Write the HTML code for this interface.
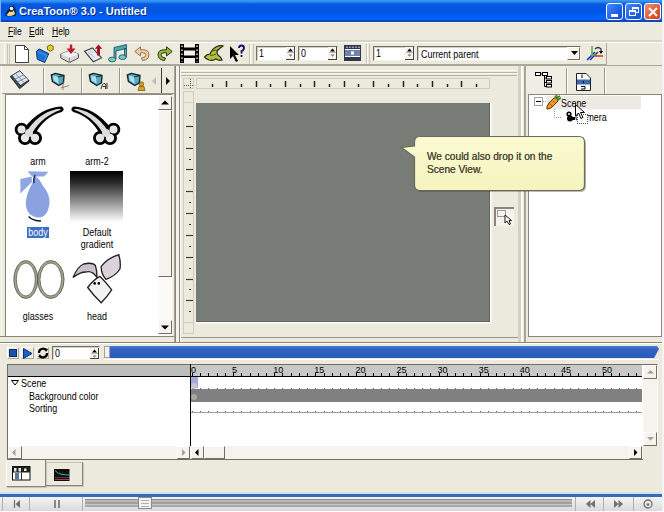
<!DOCTYPE html>
<html><head><meta charset="utf-8">
<style>
*{margin:0;padding:0;box-sizing:border-box}
body{width:664px;height:512px;overflow:hidden;background:#ECEADD;font-family:"Liberation Sans",sans-serif;font-size:11px;color:#000;position:relative}
.a{position:absolute}
svg{position:absolute;overflow:visible}
#title{left:0;top:0;width:662px;height:22px;background:linear-gradient(#3A9CF8 0px,#2A86F0 2px,#0858E0 4px,#0055E2 13px,#0060F8 16px,#0062FA 19.5px,#1848B8 20.5px,#103EA8 22px);}
#title .t{left:19px;top:4px;color:#F4F8FF;font-weight:bold;font-size:11px;line-height:14px;text-shadow:1px 1px 0 #0A2A80}
.tb{top:3px;width:17px;height:17px;border:1px solid #fff;border-radius:3px;background:linear-gradient(135deg,#4A8BFF,#1E5FE8 60%,#1A4FD0)}
.menu span{position:absolute;top:26px;font-size:10px;line-height:12px;transform-origin:0 0;transform:scaleX(.85)}
.u{position:absolute;font-size:10.5px;line-height:12px;transform-origin:0 0;transform:scaleX(.85);white-space:nowrap}
.uc{position:absolute;font-size:10.5px;line-height:12px;transform:scaleX(.85);white-space:nowrap;text-align:center;width:70px}
.hl{background:#fff}
.sh{background:#ACA899}
.spin{background:#fff;border:1px solid;border-color:#6F6F66 #F4F3EE #F4F3EE #6F6F66;box-shadow:inset 1px 1px 0 #D4D1C4}
.ruler{border:1px solid #D0CDC0}

.btn3d{background:#F4F3EE;border:1px solid;border-color:#fff #716F64 #716F64 #fff}
.vl{width:1px}
.hz{height:1px}
</style></head><body>
<!-- title -->
<div id="title" class="a">
  <svg style="left:3px;top:3px" width="15" height="15"><path d="M1.5 12 L7.5 3 L11 2.5 L13.5 9 L12.5 13 L4 13.5Z" fill="#0A1A40" opacity="0.85"/><circle cx="8.5" cy="5.5" r="1.8" fill="#F0F0E0"/><path d="M3.5 12 L7 8 L11 7.5 L12 11 L9 12.8 L5 13Z" fill="#E8DC80"/><path d="M7 8.5 L10 8" stroke="#202020" stroke-width="1.2"/></svg>
  <div class="a t">CreaToon® 3.0 - Untitled</div>
  <div class="a tb" style="left:606px"><div class="a" style="left:4px;top:10px;width:7px;height:3px;background:#fff"></div></div>
  <div class="a tb" style="left:625px"><div class="a" style="left:6px;top:3px;width:7px;height:6px;border:1px solid #fff;border-top-width:2px"></div><div class="a" style="left:3px;top:6px;width:7px;height:6px;border:1px solid #fff;border-top-width:2px;background:#2a6af0"></div></div>
  <div class="a tb" style="left:644px;background:linear-gradient(135deg,#F09070,#E05A30 60%,#C84018)"><svg style="left:3px;top:3px" width="10" height="10"><path d="M1 1L9 9M9 1L1 9" stroke="#fff" stroke-width="2"/></svg></div>
</div>
<div class="a" style="left:662px;top:0;width:2px;height:512px;background:#f4f4f4"></div>
<div class="a" style="left:0;top:0;width:1px;height:22px;background:#7AB0F8"></div>
<div class="a hz" style="left:0;top:22px;width:662px;background:#EEF4FC"></div>
<div class="a hz" style="left:0;top:23px;width:662px;background:#E6E6E0"></div>
<div class="menu">
  <span style="left:8px"><u>F</u>ile</span>
  <span style="left:29px"><u>E</u>dit</span>
  <span style="left:52px"><u>H</u>elp</span>
</div>

<!-- toolbar -->
<div class="a hz" style="left:0;top:40px;width:662px;background:#D8D5C8"></div>
<div class="a hz" style="left:0;top:41px;width:662px;background:#D8D5C8"></div>
<div class="a hz hl" style="left:0;top:42px;width:662px"></div>
<div class="a" style="left:0;top:43px;width:607px;height:22px;border-right:1px solid #ACA899;border-bottom:1px solid #ACA899"></div>
<div class="a" style="left:4px;top:44px;width:1px;height:20px;background:#fff"></div>
<div class="a" style="left:7px;top:44px;width:3px;height:20px;border-left:1px solid #C8C5B8;border-right:1px solid #C8C5B8"></div>
<!-- new -->
<svg style="left:15px;top:45px" width="14" height="18"><path d="M0.5 0.5H9.5L13.5 4.5V17.5H0.5Z" fill="#fff" stroke="#404040"/><path d="M9.5 0.5V4.5H13.5" fill="none" stroke="#404040"/></svg>
<!-- open folder w/ gem -->
<svg style="left:35px;top:44px" width="20" height="20"><path d="M1.4 7.3 L4.4 5 L13.8 9.6 L9.7 18.6 L2.2 15.2Z" fill="#1E72D0" stroke="#0A3A7A" stroke-width="1"/><path d="M3 8 L12 11.5 L9 17" stroke="#4A9AF0" fill="none"/><path d="M15.3 0.8 L18.2 2.4 L18.2 5.6 L15.3 7.2 L12.4 5.6 L12.4 2.4Z" fill="#E0D020" stroke="#6A5A00" stroke-width="0.9"/></svg>
<!-- import -->
<svg style="left:60px;top:44px" width="20" height="20"><path d="M0.8 10 L9.5 6.8 L18.5 10 L18.5 14 L9.5 18.6 L0.8 14Z" fill="#D8D8D8" stroke="#505050" stroke-width="1"/><path d="M0.8 10 L9.5 13.5 L18.5 10 L9.5 6.8Z" fill="#F4F4F4"/><path d="M9.5 13.5V18.5" stroke="#909090"/><path d="M9.8 0.5 H12.2 V4.5 H15.5 L11 10 L6.5 4.5 H9.8Z" fill="#C0182A"/></svg>
<!-- export -->
<svg style="left:84px;top:44px" width="20" height="19"><path d="M0.5 7.2 L8.4 4 L17.5 13.9 L9.3 17.7Z" fill="#E8ECF4" stroke="#404040" stroke-width="1.1"/><path d="M4 8 L11 14 M6 6.5 L9 9" stroke="#A0A8B8" stroke-width="0.8"/><path d="M14.5 0.6 L18.3 4.8 L16 4.8 L16 11.5 L13 11.5 L13 4.8 L10.8 4.8Z" fill="#A81020"/></svg>
<!-- music -->
<svg style="left:108px;top:44px" width="20" height="19"><path d="M6 3.5 L18.5 0.5 L18.5 4.5 L8 7 L8 15 L6 15Z M16.5 4.5 L18.5 4.5 L18.5 13 L16.5 13Z" fill="#4AA8B0" stroke="#1A4A5A" stroke-width="0.8"/><ellipse cx="4.2" cy="15.5" rx="3.6" ry="2.4" fill="#70D0C0" stroke="#1A4A5A" stroke-width="0.8"/><ellipse cx="14.5" cy="13.2" rx="3.6" ry="2.4" fill="#70C8D0" stroke="#1A4A5A" stroke-width="0.8"/></svg>
<!-- undo -->
<svg style="left:134px;top:46px" width="16" height="16"><path d="M0.8 5.5 L6.5 0.8 L6.5 3.8 L9.5 3.8 Q15 4 15 9 Q14.5 14 8.5 14.5 L7.5 12 Q12 11.5 12 9 Q12 6.8 9 6.8 L6.5 6.8 L6.5 10Z" fill="#F2CC9C" stroke="#8A6A48" stroke-width="0.9"/></svg>
<!-- redo -->
<svg style="left:157px;top:46px" width="16" height="16"><g transform="translate(16,0) scale(-1,1)"><path d="M0.8 5.5 L6.5 0.8 L6.5 3.8 L9.5 3.8 Q15 4 15 9 Q14.5 14 8.5 14.5 L7.5 12 Q12 11.5 12 9 Q12 6.8 9 6.8 L6.5 6.8 L6.5 10Z" fill="#9AB040" stroke="#2A3810" stroke-width="1"/></g></svg>
<!-- film -->
<svg style="left:180px;top:44px" width="19" height="19"><rect x="0" y="0" width="19" height="19" fill="#F4F2EA"/><rect x="0" y="0" width="4" height="19" fill="#000"/><rect x="15" y="0" width="4" height="19" fill="#000"/><rect x="4" y="3.5" width="11" height="3" fill="#000"/><rect x="4" y="11.5" width="11" height="2.5" fill="#000"/><path d="M2 1.5V18 M17 1.5V18" stroke="#fff" stroke-width="1.3" stroke-dasharray="1.5 2.5"/></svg>
<!-- green tool -->
<svg style="left:203px;top:44px" width="22" height="20"><path d="M1.5 13 Q4 10 7 10 Q9 5 13 3 Q17 1 20 2 Q17 4 15 6 Q13 8 15 11 Q18 13 19 16 Q16 17 13 15 Q10 17 6 16 Q3 15 1.5 13Z" fill="#B0C040" stroke="#202810" stroke-width="1.2"/><path d="M7 11 Q10 12 13 10 M9 7 Q12 6 15 6" stroke="#404A10" stroke-width="0.9" fill="none"/></svg>
<!-- help cursor -->
<svg style="left:229px;top:45px" width="16" height="18"><path d="M1 1 V14 L4 11 L7 17 L9 16 L6 10 L10 10 Z" fill="#000"/><path d="M10 3 Q10 0.5 12.5 0.5 Q15 0.5 15 3 Q15 5 12.5 6 V8.5 M12.5 10 V12" stroke="#101060" stroke-width="1.8" fill="none"/></svg>
<!-- grips -->
<div class="a" style="left:249px;top:44px;width:1px;height:20px;background:#C8C5B8"></div>
<div class="a" style="left:250px;top:44px;width:1px;height:20px;background:#fff"></div>
<div class="a" style="left:253px;top:44px;width:1px;height:20px;background:#C8C5B8"></div>
<!-- spins -->
<div class="a spin" style="left:256px;top:46px;width:40px;height:15px"></div>
<div class="u" style="left:259px;top:47px">1</div>
<div class="a" style="left:286px;top:47px;width:9px;height:13px;background:#F6F5F0;border-right:1px solid #404040;border-bottom:1px solid #404040"></div>
<div class="a hz" style="left:287px;top:52px;width:7px;background:#B8B6A8"></div>
<svg style="left:288px;top:48px" width="6" height="10"><path d="M0 3.5L2.5 0.5L5 3.5Z" fill="#000"/><path d="M0.5 6.5L2.5 8.8L4.5 6.5Z" fill="#808080"/></svg>
<div class="a spin" style="left:298px;top:46px;width:40px;height:15px"></div>
<div class="u" style="left:301px;top:47px">0</div>
<div class="a" style="left:328px;top:47px;width:9px;height:13px;background:#F6F5F0;border-right:1px solid #404040;border-bottom:1px solid #404040"></div>
<div class="a hz" style="left:329px;top:52px;width:7px;background:#B8B6A8"></div>
<svg style="left:330px;top:48px" width="6" height="10"><path d="M0 3.5L2.5 0.5L5 3.5Z" fill="#000"/><path d="M0.5 6.5L2.5 8.8L4.5 6.5Z" fill="#808080"/></svg>
<!-- frame icon -->
<svg style="left:344px;top:45px" width="17" height="16"><rect x="0.5" y="0.5" width="16" height="15" fill="#fff" stroke="#303848"/><rect x="1" y="1" width="15" height="3" fill="#303848"/><rect x="1" y="12" width="15" height="3" fill="#303848"/><rect x="1" y="5" width="15" height="6" fill="#7080B0"/><rect x="7" y="6.5" width="3" height="3" fill="#fff"/><path d="M3 1.5V3M6 1.5V3M9 1.5V3M12 1.5V3M15 1.5V3" stroke="#fff"/></svg>
<div class="a" style="left:366px;top:44px;width:1px;height:20px;background:#C8C5B8"></div>
<div class="a" style="left:367px;top:44px;width:1px;height:20px;background:#fff"></div>
<div class="a" style="left:369px;top:44px;width:1px;height:20px;background:#C8C5B8"></div>
<div class="a spin" style="left:373px;top:46px;width:42px;height:15px"></div>
<div class="u" style="left:376px;top:47px">1</div>
<div class="a" style="left:405px;top:47px;width:9px;height:13px;background:#F6F5F0;border-right:1px solid #404040;border-bottom:1px solid #404040"></div>
<div class="a hz" style="left:406px;top:52px;width:7px;background:#B8B6A8"></div>
<svg style="left:407px;top:48px" width="6" height="10"><path d="M0 3.5L2.5 0.5L5 3.5Z" fill="#000"/><path d="M0.5 6.5L2.5 8.8L4.5 6.5Z" fill="#808080"/></svg>
<div class="a spin" style="left:417px;top:46px;width:164px;height:15px"></div>
<div class="u" style="left:421px;top:48px">Current parent</div>
<div class="a btn3d" style="left:567px;top:47px;width:13px;height:13px;border-color:#fff #716F64 #716F64 #fff"></div>
<svg style="left:571px;top:51px" width="7" height="5"><path d="M0 0H7L3.5 4Z" fill="#000"/></svg>
<!-- axes icon -->
<svg style="left:586px;top:45px" width="18" height="16"><path d="M1 15 L9 7 M4 15 L12 7" stroke="#2030C0" stroke-width="1.6"/><path d="M6 1 V11 M6 10 H11" stroke="#40C040" stroke-width="1.6"/><path d="M8 11 H17" stroke="#D04030" stroke-width="1.6"/><path d="M9 4 Q12 1 15 4 L15 7" stroke="#303030" stroke-width="1.2" fill="none"/><path d="M13 6 L15 9 L17 6Z" fill="#000"/></svg>

<div class="a hz sh" style="left:0;top:65px;width:662px"></div>
<!-- LEFT PANEL -->
<div class="a" style="left:1px;top:66px;width:1px;height:272px;background:#fff"></div>
<div class="a" style="left:2px;top:67px;width:41px;height:27px;background:#F0EEE4"></div>
<div class="a vl" style="left:43px;top:68px;height:26px;background:#9A978A"></div>
<div class="a vl" style="left:44px;top:68px;height:26px;background:#fff"></div>
<div class="a vl" style="left:81px;top:68px;height:26px;background:#9A978A"></div>
<div class="a vl" style="left:82px;top:68px;height:26px;background:#fff"></div>
<div class="a vl" style="left:119px;top:68px;height:26px;background:#9A978A"></div>
<div class="a vl" style="left:120px;top:68px;height:26px;background:#fff"></div>
<div class="a vl" style="left:161px;top:68px;height:26px;background:#404040"></div>
<svg style="left:152px;top:77px" width="5" height="8"><path d="M4 0V8L0 4Z" fill="#C0BDB0"/></svg>
<svg style="left:166px;top:77px" width="5" height="8"><path d="M0 0V8L4 4Z" fill="#000"/></svg>
<!-- tab icons -->
<svg style="left:9px;top:70px" width="22" height="20"><path d="M1.2 6.5 L10.7 0.7 L20.2 10.8 L10.7 18.7Z" fill="#3A4048" stroke="#20252A" stroke-width="0.8"/><path d="M3.5 5.5 L10.7 1.3 L19.2 10 L11.5 15Z" fill="#DCE6F0"/><path d="M6.6 3.8 L15 12.7 M4.8 9.8 L14.8 4.8 M7.5 12.5 L17 7.5" stroke="#6A7A8A" stroke-width="0.8"/></svg>
<svg style="left:49px;top:71px" width="22" height="20"><path d="M2.3 4 L6.5 2.4 L15 4.5 L14.4 11.9 L9.7 14.5 L3.4 10.3Z" fill="#5AA8C0" stroke="#102A30" stroke-width="1.4" stroke-linejoin="round"/><path d="M4 4.6 L9 6 L9.6 12.8 L4.6 9.6Z" fill="#A8E0F0"/><path d="M9 6 L14.5 4.8" stroke="#102A30" stroke-width="0.9"/><path d="M11.5 17 L20.2 14.5 M14 10 V19" stroke="#8A7060" stroke-width="0.8"/></svg>
<svg style="left:87px;top:71px" width="22" height="20"><path d="M2.3 4 L6.5 2.4 L15 4.5 L14.4 11.9 L9.7 14.5 L3.4 10.3Z" fill="#5AA8C0" stroke="#102A30" stroke-width="1.4" stroke-linejoin="round"/><path d="M4 4.6 L9 6 L9.6 12.8 L4.6 9.6Z" fill="#A8E0F0"/><path d="M9 6 L14.5 4.8" stroke="#102A30" stroke-width="0.9"/><path d="M14 18 Q15 12 18 12.5 Q19.5 13.5 18.5 18 M15.5 15.5 H19 M20 12V18" stroke="#303030" stroke-width="1" fill="none"/></svg>
<svg style="left:125px;top:71px" width="22" height="20"><path d="M2.3 4 L6.5 2.4 L15 4.5 L14.4 11.9 L9.7 14.5 L3.4 10.3Z" fill="#5AA8C0" stroke="#102A30" stroke-width="1.4" stroke-linejoin="round"/><path d="M4 4.6 L9 6 L9.6 12.8 L4.6 9.6Z" fill="#A8E0F0"/><path d="M9 6 L14.5 4.8" stroke="#102A30" stroke-width="0.9"/><circle cx="16.5" cy="13" r="2.2" fill="#D8A020" stroke="#604000" stroke-width="0.6"/><path d="M13 19.5 L14 15.5 H19 L20 19.5Z" fill="#D8A020" stroke="#604000" stroke-width="0.6"/></svg>

<div class="a hz" style="left:2px;top:93px;width:172px;background:#9A978A"></div>
<div class="a" style="left:5px;top:94px;width:168px;height:243px;border:1px solid;border-color:#8A877A #F4F3EE #8A877A #8A877A"></div>
<div class="a" style="left:6px;top:95px;width:152px;height:241px;background:#fff"></div>
<div class="a" style="left:158px;top:95px;width:14px;height:241px;background:#FAFAF6"></div>
<div class="a hz" style="left:0;top:336px;width:175px;background:#8A877A"></div>
<div class="a btn3d" style="left:158px;top:96px;width:14px;height:14px;border-color:#fff #716F64 #716F64 #fff"></div>
<div class="a btn3d" style="left:158px;top:110px;width:14px;height:167px;border-color:#fff #716F64 #716F64 #fff"></div>
<div class="a btn3d" style="left:158px;top:320px;width:14px;height:14px;border-color:#fff #716F64 #716F64 #fff"></div>
<svg style="left:161px;top:100px" width="8" height="5"><path d="M0 4.5L4 0.5L8 4.5Z" fill="#000"/></svg>
<svg style="left:161px;top:325px" width="8" height="5"><path d="M0 0.5L4 4.5L8 0.5Z" fill="#000"/></svg>

<!-- arm -->
<svg style="left:14px;top:104px" width="54" height="42"><g fill="#000" stroke="#000" stroke-width="1.6" stroke-linejoin="round"><path d="M47 3.2 C36 3.7 21 10 10 26 L20 31 C26 18 37 9.7 47.5 7.2 Q50.5 5.2 47 3.2Z"/><circle cx="7.5" cy="25.5" r="6"/><circle cx="11" cy="34" r="6.2"/><circle cx="21" cy="34" r="6.2"/><circle cx="15" cy="29" r="5.5"/></g><g fill="#DCDCDC"><path d="M46 4.8 C36 5.7 23 11.5 12.5 27.5 L18 29.5 C25 17 36 9.7 46.2 6.1 Q47.5 5.5 46 4.8Z"/><circle cx="7.5" cy="25.5" r="4" fill="#E6E6E6"/><circle cx="11" cy="34" r="4.2" fill="#EAEAEA"/><circle cx="21" cy="34" r="4.2" fill="#E6E6E6"/><circle cx="15" cy="29" r="4"/></g></svg>
<svg style="left:67px;top:104px" width="54" height="42"><g transform="translate(54,0) scale(-1,1)"><g fill="#000" stroke="#000" stroke-width="1.6" stroke-linejoin="round"><path d="M47 3.2 C36 3.7 21 10 10 26 L20 31 C26 18 37 9.7 47.5 7.2 Q50.5 5.2 47 3.2Z"/><circle cx="7.5" cy="25.5" r="6"/><circle cx="11" cy="34" r="6.2"/><circle cx="21" cy="34" r="6.2"/><circle cx="15" cy="29" r="5.5"/></g><g fill="#DCDCDC"><path d="M46 4.8 C36 5.7 23 11.5 12.5 27.5 L18 29.5 C25 17 36 9.7 46.2 6.1 Q47.5 5.5 46 4.8Z"/><circle cx="7.5" cy="25.5" r="4" fill="#E6E6E6"/><circle cx="11" cy="34" r="4.2" fill="#EAEAEA"/><circle cx="21" cy="34" r="4.2" fill="#E6E6E6"/><circle cx="15" cy="29" r="4"/></g></g></svg>
<div class="uc" style="left:3px;top:155px">arm</div>
<div class="uc" style="left:62px;top:155px">arm-2</div>
<!-- body -->
<svg style="left:19px;top:170px" width="34" height="54"><path d="M8.5 1.3 L29.5 1.8 L25 6.5 L13 6.5Z" fill="#90A6E2"/><path d="M1.4 8.9 L12.6 6.5 L13 12 L1.4 23.5Z" fill="#90A6E2"/><path d="M16 6 Q20 8 24 16 Q31 24 30.5 33 Q29 47 20 47.5 Q8 47 6.7 34 Q7 24 13 14 Q15 9 16 6Z" fill="#8AA2E0"/><path d="M16 5 Q14 9 15 13" stroke="#1A2A70" stroke-width="1.6" fill="none"/><path d="M9.6 46.4 Q14 51 22 51" stroke="#101830" stroke-width="1.4" fill="none"/></svg>
<div class="a" style="left:27px;top:227px;width:22px;height:11px;background:#3D6DC5"></div>
<div class="uc" style="left:3px;top:226px;color:#fff">body</div>
<div class="a" style="left:70px;top:171px;width:53px;height:51px;background:linear-gradient(#000 0%,#303030 25%,#909090 60%,#fff 100%)"></div>
<div class="uc" style="left:62px;top:226px">Default<br>gradient</div>
<!-- glasses -->
<svg style="left:12px;top:259px" width="54" height="41"><g fill="#fff" stroke="#A4A492" stroke-width="2.6"><ellipse cx="13.8" cy="20.5" rx="10.8" ry="17.8"/><ellipse cx="38.8" cy="20.5" rx="12.1" ry="17.8"/></g><g fill="none" stroke="#4A4A3A" stroke-width="0.7"><ellipse cx="13.8" cy="20.5" rx="12" ry="19"/><ellipse cx="38.8" cy="20.5" rx="13.3" ry="19"/><ellipse cx="13.8" cy="20.5" rx="9.5" ry="16.5"/><ellipse cx="38.8" cy="20.5" rx="10.8" ry="16.5"/></g></svg>
<div class="uc" style="left:3px;top:310px">glasses</div>
<!-- head -->
<svg style="left:66px;top:250px" width="58" height="56"><path d="M7 27.5 Q12 16 17.6 14 Q26 12 29.3 15.2 Q31 20 31 27.5 Q26 20 20 22 Q14 22 7 27.5Z" fill="#C8C4CA" stroke="#202020" stroke-width="1.3"/><path d="M35.2 16.4 Q42 8 52.8 4.7 Q55 12 54 18.8 Q50 26 39.9 29.3 Q35 24 35.2 16.4Z" fill="#DCD2DC" stroke="#202020" stroke-width="1.3"/><path d="M34 26.4 Q40 32 45.7 39.9 Q41 47 35.2 52.8 Q28 46 21.7 37.5 Q27 30 34 26.4Z" fill="#F2F2F2" stroke="#202020" stroke-width="1.3"/><circle cx="28.7" cy="33.4" r="1.3" fill="#000"/><circle cx="32.8" cy="33.4" r="1.3" fill="#000"/></svg>
<div class="uc" style="left:62px;top:310px">head</div>
<!-- splitters -->
<div class="a vl" style="left:174px;top:66px;height:276px;background:#A8A598"></div>
<div class="a vl" style="left:175px;top:66px;height:276px;background:#8A877A"></div>
<div class="a" style="left:176px;top:66px;width:3px;height:276px;background:#F4F3EE"></div>
<div class="a vl" style="left:179px;top:66px;height:276px;background:#8A877A"></div>
<div class="a vl" style="left:180px;top:66px;height:276px;background:#F8F8F4"></div>

<!-- CENTER -->
<div class="a hz" style="left:181px;top:70px;width:336px;background:#FAFAF6"></div>
<div class="a hz" style="left:181px;top:72px;width:336px;background:#B8B5A8"></div>
<div class="a hz" style="left:181px;top:73px;width:336px;background:#FAFAF6"></div>
<div class="a hz" style="left:181px;top:75px;width:336px;background:#B8B5A8"></div>
<div class="a ruler" style="left:183px;top:78px;width:11px;height:11px"></div>
<svg style="left:183px;top:78px" width="11" height="11"><path d="M7.5 1V10 M1 7.5H10" stroke="#606060" stroke-dasharray="1 1"/></svg>
<div class="a ruler" style="left:196px;top:78px;width:294px;height:11px"></div>
<svg style="left:196px;top:78px" width="294" height="11" ><line x1="16.5" y1="6" x2="16.5" y2="9" stroke="#202020" stroke-width="1.5"/><line x1="30.5" y1="3" x2="30.5" y2="9" stroke="#202020" stroke-width="1.5"/><line x1="45.5" y1="6" x2="45.5" y2="9" stroke="#202020" stroke-width="1.5"/><line x1="60.5" y1="3" x2="60.5" y2="9" stroke="#202020" stroke-width="1.5"/><line x1="74.5" y1="6" x2="74.5" y2="9" stroke="#202020" stroke-width="1.5"/><line x1="89.5" y1="3" x2="89.5" y2="9" stroke="#202020" stroke-width="1.5"/><line x1="104.5" y1="6" x2="104.5" y2="9" stroke="#202020" stroke-width="1.5"/><line x1="118.5" y1="3" x2="118.5" y2="9" stroke="#202020" stroke-width="1.5"/><line x1="133.5" y1="6" x2="133.5" y2="9" stroke="#202020" stroke-width="1.5"/><line x1="148.5" y1="3" x2="148.5" y2="9" stroke="#202020" stroke-width="1.5"/><line x1="162.5" y1="6" x2="162.5" y2="9" stroke="#202020" stroke-width="1.5"/><line x1="177.5" y1="3" x2="177.5" y2="9" stroke="#202020" stroke-width="1.5"/><line x1="192.5" y1="6" x2="192.5" y2="9" stroke="#202020" stroke-width="1.5"/><line x1="207.5" y1="3" x2="207.5" y2="9" stroke="#202020" stroke-width="1.5"/><line x1="221.5" y1="6" x2="221.5" y2="9" stroke="#202020" stroke-width="1.5"/><line x1="236.5" y1="3" x2="236.5" y2="9" stroke="#202020" stroke-width="1.5"/><line x1="251.5" y1="6" x2="251.5" y2="9" stroke="#202020" stroke-width="1.5"/><line x1="265.5" y1="3" x2="265.5" y2="9" stroke="#202020" stroke-width="1.5"/><line x1="280.5" y1="6" x2="280.5" y2="9" stroke="#202020" stroke-width="1.5"/></svg>
<div class="a ruler" style="left:183px;top:91px;width:11px;height:243px"></div>
<div class="a hz" style="left:184px;top:102px;width:9px;background:#D0CDC0"></div>
<div class="a hz" style="left:184px;top:322px;width:9px;background:#D0CDC0"></div>
<svg style="left:183px;top:91px" width="11" height="243" ><line x1="6" y1="24.5" x2="8" y2="24.5" stroke="#404040" stroke-width="1.2"/><line x1="3" y1="35.5" x2="10" y2="35.5" stroke="#404040" stroke-width="1.2"/><line x1="6" y1="46.5" x2="8" y2="46.5" stroke="#404040" stroke-width="1.2"/><line x1="3" y1="57.5" x2="10" y2="57.5" stroke="#404040" stroke-width="1.2"/><line x1="6" y1="68.5" x2="8" y2="68.5" stroke="#404040" stroke-width="1.2"/><line x1="3" y1="78.5" x2="10" y2="78.5" stroke="#404040" stroke-width="1.2"/><line x1="6" y1="89.5" x2="8" y2="89.5" stroke="#404040" stroke-width="1.2"/><line x1="3" y1="100.5" x2="10" y2="100.5" stroke="#404040" stroke-width="1.2"/><line x1="6" y1="111.5" x2="8" y2="111.5" stroke="#404040" stroke-width="1.2"/><line x1="3" y1="122.5" x2="10" y2="122.5" stroke="#404040" stroke-width="1.2"/><line x1="6" y1="133.5" x2="8" y2="133.5" stroke="#404040" stroke-width="1.2"/><line x1="3" y1="144.5" x2="10" y2="144.5" stroke="#404040" stroke-width="1.2"/><line x1="6" y1="155.5" x2="8" y2="155.5" stroke="#404040" stroke-width="1.2"/><line x1="3" y1="166.5" x2="10" y2="166.5" stroke="#404040" stroke-width="1.2"/><line x1="6" y1="177.5" x2="8" y2="177.5" stroke="#404040" stroke-width="1.2"/><line x1="3" y1="188.5" x2="10" y2="188.5" stroke="#404040" stroke-width="1.2"/><line x1="6" y1="198.5" x2="8" y2="198.5" stroke="#404040" stroke-width="1.2"/><line x1="3" y1="209.5" x2="10" y2="209.5" stroke="#404040" stroke-width="1.2"/><line x1="6" y1="220.5" x2="8" y2="220.5" stroke="#404040" stroke-width="1.2"/></svg>
<div class="a" style="left:196px;top:103px;width:296px;height:221px;background:#F8F8F4"></div>
<div class="a" style="left:196px;top:103px;width:294px;height:219px;background:#777C76;border-right:1px solid #646864;border-bottom:1px solid #646864"></div>
<div class="a" style="left:494px;top:207px;width:20px;height:19px;background:#F4F3EC;border-top:2px solid #8A877A;border-left:2px solid #8A877A"></div>
<svg style="left:497px;top:210px" width="18" height="16"><rect x="0.5" y="0.5" width="8" height="6" fill="none" stroke="#404040" stroke-dasharray="1 1"/><path d="M8 5 V13 L10 11 L12 14.5 L13.5 14 L12 10.5 L14.5 10.5Z" fill="#fff" stroke="#000" stroke-width="0.9"/></svg>
<div class="a" style="left:518px;top:66px;width:3px;height:276px;background:#D4D1C4"></div>
<div class="a" style="left:521px;top:66px;width:2px;height:276px;background:#FAFAF6"></div>
<div class="a" style="left:524px;top:66px;width:2px;height:276px;background:#A8A598"></div>
<div class="a hz" style="left:181px;top:337px;width:337px;background:#9A978A"></div>

<!-- RIGHT -->
<div class="a" style="left:526px;top:67px;width:40px;height:27px;background:#F0EEE4"></div>
<div class="a vl" style="left:566px;top:68px;height:26px;background:#9A978A"></div>
<div class="a vl" style="left:567px;top:68px;height:26px;background:#fff"></div>
<div class="a vl" style="left:604px;top:68px;height:26px;background:#9A978A"></div>
<div class="a vl" style="left:605px;top:68px;height:26px;background:#fff"></div>
<svg style="left:535px;top:72px" width="17" height="17"><rect x="0.5" y="0.5" width="5" height="3" fill="#fff" stroke="#000"/><rect x="7.5" y="0.5" width="5" height="3" fill="#fff" stroke="#000"/><path d="M5.5 2H7.5 M9.5 3.5V14.5 M9.5 6H11 M9.5 10.5H11 M9.5 14.5H11" stroke="#000" fill="none"/><rect x="11.5" y="4.5" width="5" height="2.5" fill="#fff" stroke="#000"/><rect x="11.5" y="8.5" width="5" height="2.5" fill="#fff" stroke="#000"/><rect x="11.5" y="12.5" width="5" height="2.5" fill="#fff" stroke="#000"/></svg>
<svg style="left:576px;top:73px" width="15" height="18"><path d="M0.5 0.5H10L14.5 5V17.5H0.5Z" fill="#fff" stroke="#202020"/><rect x="1" y="6.5" width="13" height="5" fill="#3A6AB0"/><path d="M6 1.5V5 M7.5 8V10 M5 13.5H9V16H5" stroke="#000" fill="none"/></svg>
<div class="a" style="left:528px;top:94px;width:134px;height:243px;border:1px solid #8A877A;background:#fff"></div>
<div class="a" style="left:547px;top:96px;width:94px;height:13px;background:#ECEAE2"></div>
<svg style="left:534px;top:97px" width="30" height="24"><rect x="0.5" y="0.5" width="8" height="8" fill="#fff" stroke="#A0A0A0"/><path d="M2 4.5H7" stroke="#000"/><path d="M9 4.5H12" stroke="#A0A0A0" stroke-dasharray="1 1"/><path d="M20.5 12V20.5H28" stroke="#909090" fill="none" stroke-dasharray="1 1"/></svg>
<svg style="left:546px;top:96px" width="16" height="14"><path d="M1 13 Q0 11 3 7 L8 2 Q12 1 12 5 L6 11 Q3 13.5 1 13Z" fill="#F29A28" stroke="#5A3000" stroke-width="1"/><path d="M4 8L6 10 M7 5L9 7" stroke="#A05010" stroke-width="0.8"/><path d="M10 2 L14 0 M11 4 L15 2 M9 1 L11 -1" stroke="#2A8010" stroke-width="1.6"/></svg>
<div class="u" style="left:561px;top:97px">Scene</div>
<svg style="left:565px;top:111px" width="10" height="11"><circle cx="4" cy="3" r="2.6" fill="#000"/><circle cx="5" cy="7.5" r="3" fill="#000"/><circle cx="4" cy="3" r="1" fill="#fff"/><rect x="7" y="6" width="3" height="3" fill="#000"/></svg>
<div class="u" style="left:575px;top:111px">Camera</div>
<div class="a" style="left:577px;top:114px;width:11px;height:10px;background:#fff;border:1px dotted #505050"></div>
<svg style="left:575px;top:104px" width="12" height="18"><path d="M0.5 0.5V12L3.5 9L6 14.5L8 13.5L5.5 8.5H9.5Z" fill="#fff" stroke="#000" stroke-width="1"/></svg>

<!-- balloon -->
<svg style="left:400px;top:135px" width="190" height="60"><defs><linearGradient id="bg" x1="0" y1="0" x2="0" y2="1"><stop offset="0" stop-color="#FBFAD2"/><stop offset="1" stop-color="#F6F3BE"/></linearGradient></defs><path d="M20 1.5 Q14.5 1.5 14.5 7 L14.5 11 L1.5 12.5 L14.5 22 L14.5 50 Q14.5 55.5 20 55.5 L179 55.5 Q184.5 55.5 184.5 50 L184.5 7 Q184.5 1.5 179 1.5 Z" fill="#404030" opacity="0.35" transform="translate(1.5,1.5)"/><path d="M20 1.5 Q14.5 1.5 14.5 7 L14.5 11 L1.5 12.5 L14.5 22 L14.5 50 Q14.5 55.5 20 55.5 L179 55.5 Q184.5 55.5 184.5 50 L184.5 7 Q184.5 1.5 179 1.5 Z" fill="url(#bg)" stroke="#6A6A58" stroke-width="1.2"/></svg>
<div class="u" style="left:427px;top:150px;color:#4A4A38;text-shadow:0 0 0.5px #4A4A38;line-height:13px;font-size:11.5px;transform:scaleX(.88)">We could also drop it on the<br>Scene View.</div>

<!-- timeline controls -->
<div class="a hz" style="left:0;top:342px;width:662px;background:#8A877A"></div>
<div class="a hz" style="left:0;top:343px;width:662px;background:#fff"></div>
<div class="a" style="left:7px;top:347px;width:12px;height:12px;border:1px solid;border-color:#fff #ACA899 #ACA899 #fff"></div>
<div class="a" style="left:9px;top:349px;width:8px;height:8px;background:#1A52B0;border:1px solid #0A2A70"></div>
<div class="a" style="left:21px;top:347px;width:13px;height:12px;border:1px solid;border-color:#fff #ACA899 #ACA899 #fff"></div>
<svg style="left:23px;top:348px" width="10" height="11"><path d="M0.5 0.5L9 5.5L0.5 10.5Z" fill="#1A60C0" stroke="#0A3080"/></svg>
<div class="a" style="left:36px;top:347px;width:13px;height:12px;border:1px solid;border-color:#fff #ACA899 #ACA899 #fff"></div>
<svg style="left:37px;top:347px" width="12" height="12"><path d="M2 6 A4 4 0 0 1 9 3" stroke="#000" stroke-width="2.2" fill="none"/><path d="M10 6 A4 4 0 0 1 3 9" stroke="#000" stroke-width="2.2" fill="none"/><path d="M7 1 L11 2 L9 5Z M5 11 L1 10 L3 7Z" fill="#000"/></svg>
<div class="a spin" style="left:52px;top:346px;width:48px;height:14px"></div>
<div class="u" style="left:55px;top:347px">0</div>
<div class="a" style="left:90px;top:348px;width:9px;height:11px;background:#F6F5F0;border-right:1px solid #404040;border-bottom:1px solid #404040"></div>
<div class="a hz" style="left:91px;top:353px;width:7px;background:#B8B6A8"></div>
<svg style="left:92px;top:349px" width="6" height="10"><path d="M0 3.5L2.5 0.5L5 3.5Z" fill="#000"/><path d="M0.5 6.5L2.5 8.8L4.5 6.5Z" fill="#808080"/></svg>
<div class="a" style="left:104px;top:346px;width:555px;height:12px;background:linear-gradient(#4A7ED0,#2F62C2 30%,#2A5CBC);clip-path:polygon(0 0,553px 0,555px 3px,550px 12px,0 12px)"></div>
<div class="a" style="left:104px;top:346px;width:6px;height:12px;background:#F0F0F0;border:1px solid #A0A0A0"></div>
<div class="a hz" style="left:104px;top:359px;width:555px;background:#fff"></div>
<!-- timeline -->
<div class="a" style="left:7px;top:364px;width:651px;height:96px;border:1px solid;border-color:#716F64 #fff #fff #716F64;background:#fff"></div>
<div class="a" style="left:8px;top:365px;width:182px;height:11px;background:#BDBDBD"></div>
<div class="a" style="left:190px;top:365px;width:452px;height:11px;background:#C8C8C8"></div>
<div class="a hz" style="left:8px;top:376px;width:634px;background:#000"></div>
<svg style="left:190px;top:365px" width="452" height="50" ><line x1="2.5" y1="8" x2="2.5" y2="11" stroke="#000" stroke-width="1"/><line x1="2.5" y1="23" x2="2.5" y2="25" stroke="#606060" stroke-width="1"/><line x1="2.5" y1="46" x2="2.5" y2="48" stroke="#606060" stroke-width="1"/><text x="1.00" y="8" font-size="9" font-family="Liberation Sans">0</text><line x1="10.5" y1="8" x2="10.5" y2="11" stroke="#000" stroke-width="1"/><line x1="10.5" y1="23" x2="10.5" y2="25" stroke="#606060" stroke-width="1"/><line x1="10.5" y1="46" x2="10.5" y2="48" stroke="#606060" stroke-width="1"/><line x1="18.5" y1="8" x2="18.5" y2="11" stroke="#000" stroke-width="1"/><line x1="18.5" y1="23" x2="18.5" y2="25" stroke="#606060" stroke-width="1"/><line x1="18.5" y1="46" x2="18.5" y2="48" stroke="#606060" stroke-width="1"/><line x1="27.5" y1="8" x2="27.5" y2="11" stroke="#000" stroke-width="1"/><line x1="27.5" y1="23" x2="27.5" y2="25" stroke="#606060" stroke-width="1"/><line x1="27.5" y1="46" x2="27.5" y2="48" stroke="#606060" stroke-width="1"/><line x1="35.5" y1="8" x2="35.5" y2="11" stroke="#000" stroke-width="1"/><line x1="35.5" y1="23" x2="35.5" y2="25" stroke="#606060" stroke-width="1"/><line x1="35.5" y1="46" x2="35.5" y2="48" stroke="#606060" stroke-width="1"/><line x1="43.5" y1="8" x2="43.5" y2="11" stroke="#000" stroke-width="1"/><line x1="43.5" y1="23" x2="43.5" y2="25" stroke="#606060" stroke-width="1"/><line x1="43.5" y1="46" x2="43.5" y2="48" stroke="#606060" stroke-width="1"/><text x="42.10" y="8" font-size="9" font-family="Liberation Sans">5</text><line x1="51.5" y1="8" x2="51.5" y2="11" stroke="#000" stroke-width="1"/><line x1="51.5" y1="23" x2="51.5" y2="25" stroke="#606060" stroke-width="1"/><line x1="51.5" y1="46" x2="51.5" y2="48" stroke="#606060" stroke-width="1"/><line x1="60.5" y1="8" x2="60.5" y2="11" stroke="#000" stroke-width="1"/><line x1="60.5" y1="23" x2="60.5" y2="25" stroke="#606060" stroke-width="1"/><line x1="60.5" y1="46" x2="60.5" y2="48" stroke="#606060" stroke-width="1"/><line x1="68.5" y1="8" x2="68.5" y2="11" stroke="#000" stroke-width="1"/><line x1="68.5" y1="23" x2="68.5" y2="25" stroke="#606060" stroke-width="1"/><line x1="68.5" y1="46" x2="68.5" y2="48" stroke="#606060" stroke-width="1"/><line x1="76.5" y1="8" x2="76.5" y2="11" stroke="#000" stroke-width="1"/><line x1="76.5" y1="23" x2="76.5" y2="25" stroke="#606060" stroke-width="1"/><line x1="76.5" y1="46" x2="76.5" y2="48" stroke="#606060" stroke-width="1"/><line x1="84.5" y1="8" x2="84.5" y2="11" stroke="#000" stroke-width="1"/><line x1="84.5" y1="23" x2="84.5" y2="25" stroke="#606060" stroke-width="1"/><line x1="84.5" y1="46" x2="84.5" y2="48" stroke="#606060" stroke-width="1"/><text x="83.20" y="8" font-size="9" font-family="Liberation Sans">10</text><line x1="92.5" y1="8" x2="92.5" y2="11" stroke="#000" stroke-width="1"/><line x1="92.5" y1="23" x2="92.5" y2="25" stroke="#606060" stroke-width="1"/><line x1="92.5" y1="46" x2="92.5" y2="48" stroke="#606060" stroke-width="1"/><line x1="101.5" y1="8" x2="101.5" y2="11" stroke="#000" stroke-width="1"/><line x1="101.5" y1="23" x2="101.5" y2="25" stroke="#606060" stroke-width="1"/><line x1="101.5" y1="46" x2="101.5" y2="48" stroke="#606060" stroke-width="1"/><line x1="109.5" y1="8" x2="109.5" y2="11" stroke="#000" stroke-width="1"/><line x1="109.5" y1="23" x2="109.5" y2="25" stroke="#606060" stroke-width="1"/><line x1="109.5" y1="46" x2="109.5" y2="48" stroke="#606060" stroke-width="1"/><line x1="117.5" y1="8" x2="117.5" y2="11" stroke="#000" stroke-width="1"/><line x1="117.5" y1="23" x2="117.5" y2="25" stroke="#606060" stroke-width="1"/><line x1="117.5" y1="46" x2="117.5" y2="48" stroke="#606060" stroke-width="1"/><line x1="125.5" y1="8" x2="125.5" y2="11" stroke="#000" stroke-width="1"/><line x1="125.5" y1="23" x2="125.5" y2="25" stroke="#606060" stroke-width="1"/><line x1="125.5" y1="46" x2="125.5" y2="48" stroke="#606060" stroke-width="1"/><text x="124.30" y="8" font-size="9" font-family="Liberation Sans">15</text><line x1="134.5" y1="8" x2="134.5" y2="11" stroke="#000" stroke-width="1"/><line x1="134.5" y1="23" x2="134.5" y2="25" stroke="#606060" stroke-width="1"/><line x1="134.5" y1="46" x2="134.5" y2="48" stroke="#606060" stroke-width="1"/><line x1="142.5" y1="8" x2="142.5" y2="11" stroke="#000" stroke-width="1"/><line x1="142.5" y1="23" x2="142.5" y2="25" stroke="#606060" stroke-width="1"/><line x1="142.5" y1="46" x2="142.5" y2="48" stroke="#606060" stroke-width="1"/><line x1="150.5" y1="8" x2="150.5" y2="11" stroke="#000" stroke-width="1"/><line x1="150.5" y1="23" x2="150.5" y2="25" stroke="#606060" stroke-width="1"/><line x1="150.5" y1="46" x2="150.5" y2="48" stroke="#606060" stroke-width="1"/><line x1="158.5" y1="8" x2="158.5" y2="11" stroke="#000" stroke-width="1"/><line x1="158.5" y1="23" x2="158.5" y2="25" stroke="#606060" stroke-width="1"/><line x1="158.5" y1="46" x2="158.5" y2="48" stroke="#606060" stroke-width="1"/><line x1="166.5" y1="8" x2="166.5" y2="11" stroke="#000" stroke-width="1"/><line x1="166.5" y1="23" x2="166.5" y2="25" stroke="#606060" stroke-width="1"/><line x1="166.5" y1="46" x2="166.5" y2="48" stroke="#606060" stroke-width="1"/><text x="165.40" y="8" font-size="9" font-family="Liberation Sans">20</text><line x1="175.5" y1="8" x2="175.5" y2="11" stroke="#000" stroke-width="1"/><line x1="175.5" y1="23" x2="175.5" y2="25" stroke="#606060" stroke-width="1"/><line x1="175.5" y1="46" x2="175.5" y2="48" stroke="#606060" stroke-width="1"/><line x1="183.5" y1="8" x2="183.5" y2="11" stroke="#000" stroke-width="1"/><line x1="183.5" y1="23" x2="183.5" y2="25" stroke="#606060" stroke-width="1"/><line x1="183.5" y1="46" x2="183.5" y2="48" stroke="#606060" stroke-width="1"/><line x1="191.5" y1="8" x2="191.5" y2="11" stroke="#000" stroke-width="1"/><line x1="191.5" y1="23" x2="191.5" y2="25" stroke="#606060" stroke-width="1"/><line x1="191.5" y1="46" x2="191.5" y2="48" stroke="#606060" stroke-width="1"/><line x1="199.5" y1="8" x2="199.5" y2="11" stroke="#000" stroke-width="1"/><line x1="199.5" y1="23" x2="199.5" y2="25" stroke="#606060" stroke-width="1"/><line x1="199.5" y1="46" x2="199.5" y2="48" stroke="#606060" stroke-width="1"/><line x1="208.5" y1="8" x2="208.5" y2="11" stroke="#000" stroke-width="1"/><line x1="208.5" y1="23" x2="208.5" y2="25" stroke="#606060" stroke-width="1"/><line x1="208.5" y1="46" x2="208.5" y2="48" stroke="#606060" stroke-width="1"/><text x="206.50" y="8" font-size="9" font-family="Liberation Sans">25</text><line x1="216.5" y1="8" x2="216.5" y2="11" stroke="#000" stroke-width="1"/><line x1="216.5" y1="23" x2="216.5" y2="25" stroke="#606060" stroke-width="1"/><line x1="216.5" y1="46" x2="216.5" y2="48" stroke="#606060" stroke-width="1"/><line x1="224.5" y1="8" x2="224.5" y2="11" stroke="#000" stroke-width="1"/><line x1="224.5" y1="23" x2="224.5" y2="25" stroke="#606060" stroke-width="1"/><line x1="224.5" y1="46" x2="224.5" y2="48" stroke="#606060" stroke-width="1"/><line x1="232.5" y1="8" x2="232.5" y2="11" stroke="#000" stroke-width="1"/><line x1="232.5" y1="23" x2="232.5" y2="25" stroke="#606060" stroke-width="1"/><line x1="232.5" y1="46" x2="232.5" y2="48" stroke="#606060" stroke-width="1"/><line x1="240.5" y1="8" x2="240.5" y2="11" stroke="#000" stroke-width="1"/><line x1="240.5" y1="23" x2="240.5" y2="25" stroke="#606060" stroke-width="1"/><line x1="240.5" y1="46" x2="240.5" y2="48" stroke="#606060" stroke-width="1"/><line x1="249.5" y1="8" x2="249.5" y2="11" stroke="#000" stroke-width="1"/><line x1="249.5" y1="23" x2="249.5" y2="25" stroke="#606060" stroke-width="1"/><line x1="249.5" y1="46" x2="249.5" y2="48" stroke="#606060" stroke-width="1"/><text x="247.60" y="8" font-size="9" font-family="Liberation Sans">30</text><line x1="257.5" y1="8" x2="257.5" y2="11" stroke="#000" stroke-width="1"/><line x1="257.5" y1="23" x2="257.5" y2="25" stroke="#606060" stroke-width="1"/><line x1="257.5" y1="46" x2="257.5" y2="48" stroke="#606060" stroke-width="1"/><line x1="265.5" y1="8" x2="265.5" y2="11" stroke="#000" stroke-width="1"/><line x1="265.5" y1="23" x2="265.5" y2="25" stroke="#606060" stroke-width="1"/><line x1="265.5" y1="46" x2="265.5" y2="48" stroke="#606060" stroke-width="1"/><line x1="273.5" y1="8" x2="273.5" y2="11" stroke="#000" stroke-width="1"/><line x1="273.5" y1="23" x2="273.5" y2="25" stroke="#606060" stroke-width="1"/><line x1="273.5" y1="46" x2="273.5" y2="48" stroke="#606060" stroke-width="1"/><line x1="281.5" y1="8" x2="281.5" y2="11" stroke="#000" stroke-width="1"/><line x1="281.5" y1="23" x2="281.5" y2="25" stroke="#606060" stroke-width="1"/><line x1="281.5" y1="46" x2="281.5" y2="48" stroke="#606060" stroke-width="1"/><line x1="290.5" y1="8" x2="290.5" y2="11" stroke="#000" stroke-width="1"/><line x1="290.5" y1="23" x2="290.5" y2="25" stroke="#606060" stroke-width="1"/><line x1="290.5" y1="46" x2="290.5" y2="48" stroke="#606060" stroke-width="1"/><text x="288.70" y="8" font-size="9" font-family="Liberation Sans">35</text><line x1="298.5" y1="8" x2="298.5" y2="11" stroke="#000" stroke-width="1"/><line x1="298.5" y1="23" x2="298.5" y2="25" stroke="#606060" stroke-width="1"/><line x1="298.5" y1="46" x2="298.5" y2="48" stroke="#606060" stroke-width="1"/><line x1="306.5" y1="8" x2="306.5" y2="11" stroke="#000" stroke-width="1"/><line x1="306.5" y1="23" x2="306.5" y2="25" stroke="#606060" stroke-width="1"/><line x1="306.5" y1="46" x2="306.5" y2="48" stroke="#606060" stroke-width="1"/><line x1="314.5" y1="8" x2="314.5" y2="11" stroke="#000" stroke-width="1"/><line x1="314.5" y1="23" x2="314.5" y2="25" stroke="#606060" stroke-width="1"/><line x1="314.5" y1="46" x2="314.5" y2="48" stroke="#606060" stroke-width="1"/><line x1="323.5" y1="8" x2="323.5" y2="11" stroke="#000" stroke-width="1"/><line x1="323.5" y1="23" x2="323.5" y2="25" stroke="#606060" stroke-width="1"/><line x1="323.5" y1="46" x2="323.5" y2="48" stroke="#606060" stroke-width="1"/><line x1="331.5" y1="8" x2="331.5" y2="11" stroke="#000" stroke-width="1"/><line x1="331.5" y1="23" x2="331.5" y2="25" stroke="#606060" stroke-width="1"/><line x1="331.5" y1="46" x2="331.5" y2="48" stroke="#606060" stroke-width="1"/><text x="329.80" y="8" font-size="9" font-family="Liberation Sans">40</text><line x1="339.5" y1="8" x2="339.5" y2="11" stroke="#000" stroke-width="1"/><line x1="339.5" y1="23" x2="339.5" y2="25" stroke="#606060" stroke-width="1"/><line x1="339.5" y1="46" x2="339.5" y2="48" stroke="#606060" stroke-width="1"/><line x1="347.5" y1="8" x2="347.5" y2="11" stroke="#000" stroke-width="1"/><line x1="347.5" y1="23" x2="347.5" y2="25" stroke="#606060" stroke-width="1"/><line x1="347.5" y1="46" x2="347.5" y2="48" stroke="#606060" stroke-width="1"/><line x1="355.5" y1="8" x2="355.5" y2="11" stroke="#000" stroke-width="1"/><line x1="355.5" y1="23" x2="355.5" y2="25" stroke="#606060" stroke-width="1"/><line x1="355.5" y1="46" x2="355.5" y2="48" stroke="#606060" stroke-width="1"/><line x1="364.5" y1="8" x2="364.5" y2="11" stroke="#000" stroke-width="1"/><line x1="364.5" y1="23" x2="364.5" y2="25" stroke="#606060" stroke-width="1"/><line x1="364.5" y1="46" x2="364.5" y2="48" stroke="#606060" stroke-width="1"/><line x1="372.5" y1="8" x2="372.5" y2="11" stroke="#000" stroke-width="1"/><line x1="372.5" y1="23" x2="372.5" y2="25" stroke="#606060" stroke-width="1"/><line x1="372.5" y1="46" x2="372.5" y2="48" stroke="#606060" stroke-width="1"/><text x="370.90" y="8" font-size="9" font-family="Liberation Sans">45</text><line x1="380.5" y1="8" x2="380.5" y2="11" stroke="#000" stroke-width="1"/><line x1="380.5" y1="23" x2="380.5" y2="25" stroke="#606060" stroke-width="1"/><line x1="380.5" y1="46" x2="380.5" y2="48" stroke="#606060" stroke-width="1"/><line x1="388.5" y1="8" x2="388.5" y2="11" stroke="#000" stroke-width="1"/><line x1="388.5" y1="23" x2="388.5" y2="25" stroke="#606060" stroke-width="1"/><line x1="388.5" y1="46" x2="388.5" y2="48" stroke="#606060" stroke-width="1"/><line x1="397.5" y1="8" x2="397.5" y2="11" stroke="#000" stroke-width="1"/><line x1="397.5" y1="23" x2="397.5" y2="25" stroke="#606060" stroke-width="1"/><line x1="397.5" y1="46" x2="397.5" y2="48" stroke="#606060" stroke-width="1"/><line x1="405.5" y1="8" x2="405.5" y2="11" stroke="#000" stroke-width="1"/><line x1="405.5" y1="23" x2="405.5" y2="25" stroke="#606060" stroke-width="1"/><line x1="405.5" y1="46" x2="405.5" y2="48" stroke="#606060" stroke-width="1"/><line x1="413.5" y1="8" x2="413.5" y2="11" stroke="#000" stroke-width="1"/><line x1="413.5" y1="23" x2="413.5" y2="25" stroke="#606060" stroke-width="1"/><line x1="413.5" y1="46" x2="413.5" y2="48" stroke="#606060" stroke-width="1"/><text x="412.00" y="8" font-size="9" font-family="Liberation Sans">50</text><line x1="421.5" y1="8" x2="421.5" y2="11" stroke="#000" stroke-width="1"/><line x1="421.5" y1="23" x2="421.5" y2="25" stroke="#606060" stroke-width="1"/><line x1="421.5" y1="46" x2="421.5" y2="48" stroke="#606060" stroke-width="1"/><line x1="429.5" y1="8" x2="429.5" y2="11" stroke="#000" stroke-width="1"/><line x1="429.5" y1="23" x2="429.5" y2="25" stroke="#606060" stroke-width="1"/><line x1="429.5" y1="46" x2="429.5" y2="48" stroke="#606060" stroke-width="1"/><line x1="438.5" y1="8" x2="438.5" y2="11" stroke="#000" stroke-width="1"/><line x1="438.5" y1="23" x2="438.5" y2="25" stroke="#606060" stroke-width="1"/><line x1="438.5" y1="46" x2="438.5" y2="48" stroke="#606060" stroke-width="1"/><line x1="446.5" y1="8" x2="446.5" y2="11" stroke="#000" stroke-width="1"/><line x1="446.5" y1="23" x2="446.5" y2="25" stroke="#606060" stroke-width="1"/><line x1="446.5" y1="46" x2="446.5" y2="48" stroke="#606060" stroke-width="1"/><line x1="0" y1="47.5" x2="452" y2="47.5" stroke="#A0A0A0" stroke-width="1"/></svg>
<div class="a" style="left:191px;top:389px;width:451px;height:13px;background:#808080"></div>
<div class="a" style="left:191px;top:377px;width:7px;height:11px;background:#A8A8E0"></div>
<div class="a" style="left:191px;top:383px;width:6px;height:6px;border-radius:3px;background:#C8C8D0"></div>
<div class="a" style="left:191px;top:394px;width:6px;height:6px;border-radius:3px;background:#A8A8A8"></div>
<div class="a" style="left:190px;top:364px;width:1px;height:82px;background:#000"></div>
<svg style="left:11px;top:380px" width="8" height="6"><path d="M0.5 0.5H7.5L4 5Z" fill="#fff" stroke="#000"/></svg>
<div class="u" style="left:21px;top:377px">Scene</div>
<div class="u" style="left:29px;top:390px">Background color</div>
<div class="u" style="left:29px;top:402px">Sorting</div>
<div class="a" style="left:643px;top:365px;width:14px;height:81px;background:#F4F3EE"></div>
<div class="a btn3d" style="left:643px;top:365px;width:14px;height:14px;border-color:#fff #716F64 #716F64 #fff"></div>
<svg style="left:647px;top:370px" width="7" height="4"><path d="M0 3.5L3.5 0L7 3.5Z" fill="#A0A0A0"/></svg>
<div class="a btn3d" style="left:643px;top:432px;width:14px;height:14px;border-color:#fff #716F64 #716F64 #fff"></div>
<svg style="left:647px;top:437px" width="7" height="4"><path d="M0 0L3.5 3.5L7 0Z" fill="#A0A0A0"/></svg>
<div class="a" style="left:8px;top:446px;width:650px;height:13px;background:#F4F3EE"></div>
<div class="a btn3d" style="left:8px;top:446px;width:14px;height:13px;border-color:#fff #716F64 #716F64 #fff"></div>
<svg style="left:12px;top:449px" width="4" height="7"><path d="M3.5 0V7L0 3.5Z" fill="#A0A0A0"/></svg>
<div class="a btn3d" style="left:177px;top:446px;width:13px;height:13px;border-color:#fff #716F64 #716F64 #fff"></div>
<svg style="left:182px;top:449px" width="4" height="7"><path d="M0 0V7L3.5 3.5Z" fill="#A0A0A0"/></svg>
<div class="a btn3d" style="left:191px;top:446px;width:13px;height:13px;border-color:#fff #716F64 #716F64 #fff"></div>
<svg style="left:195px;top:449px" width="4" height="7"><path d="M3.5 0V7L0 3.5Z" fill="#000"/></svg>
<div class="a btn3d" style="left:204px;top:446px;width:21px;height:13px;border-color:#fff #716F64 #716F64 #fff"></div>
<div class="a btn3d" style="left:629px;top:446px;width:13px;height:13px;border-color:#fff #716F64 #716F64 #fff"></div>
<svg style="left:634px;top:449px" width="4" height="7"><path d="M0 0V7L3.5 3.5Z" fill="#000"/></svg>
<div class="a" style="left:643px;top:446px;width:15px;height:14px;background:#ECEADD"></div>
<div class="a hz" style="left:7px;top:459px;width:636px;background:#716F64"></div>

<!-- bottom tabs -->
<div class="a" style="left:6px;top:460px;width:40px;height:27px;background:#F0EEE4;border-left:1px solid #fff;border-right:1px solid #8A877A;border-bottom:1px solid #8A877A;box-shadow:1px 1px 0 #C8C5B8"></div>
<div class="a" style="left:46px;top:462px;width:37px;height:24px;border-right:1px solid #8A877A;border-bottom:1px solid #8A877A;border-top:1px solid #C8C5B8;box-shadow:1px 1px 0 #C8C5B8"></div>
<svg style="left:12px;top:466px" width="19" height="15"><rect x="0.5" y="0.5" width="17.5" height="13.5" fill="#fff" stroke="#101010"/><rect x="1" y="1" width="17" height="5.5" fill="#202020"/><path d="M2 2H4.5V5.5H2Z M6.5 2H9V5.5H6.5Z M12 2.5H14.5V5H12Z" fill="#E8E8E8"/><rect x="3" y="7" width="4" height="6.5" fill="#5A7A9A"/><path d="M9.5 6.5V14" stroke="#303030"/></svg>
<svg style="left:54px;top:469px" width="16" height="13"><rect x="0" y="0" width="15.5" height="12" fill="#101010"/><path d="M1 1.5 Q4 5 8 5.5 L15 6" stroke="#40B080" fill="none" stroke-width="1"/><path d="M1 8.5H15" stroke="#3A4AA0" stroke-width="0.8"/><path d="M1 10.5H15" stroke="#C03030" stroke-width="1"/></svg>

<!-- media bar -->
<div class="a" style="left:0;top:492px;width:662px;height:2px;background:#D0E0F8"></div>
<div class="a" style="left:0;top:494px;width:662px;height:3px;background:#3A6AB0"></div>
<div class="a" style="left:0;top:497px;width:662px;height:14px;background:linear-gradient(#F4F4F4,#DADADA)"></div>
<div class="a hz" style="left:0;top:511px;width:664px;background:#fff"></div>
<div class="a vl" style="left:2px;top:497px;height:14px;background:#B0B0B0"></div>
<div class="a vl" style="left:29px;top:497px;height:14px;background:#B0B0B0"></div>
<div class="a vl" style="left:82px;top:497px;height:14px;background:#B0B0B0"></div>
<svg style="left:14px;top:500px" width="6" height="8"><path d="M0.5 0V8" stroke="#707070" stroke-width="1.2"/><path d="M6 0V8L1.5 4Z" fill="#707070"/></svg>
<svg style="left:54px;top:500px" width="6" height="8"><path d="M1 0V8M5 0V8" stroke="#707070" stroke-width="1.6"/></svg>
<div class="a" style="left:85px;top:499px;width:487px;height:10px;background:linear-gradient(#909090 0,#909090 1.5px,#B8B8B8 1.5px,#B8B8B8 3px,#A0A0A0 3px,#A0A0A0 5px,#C8C8C8 5px,#C8C8C8 6.5px,#A8A8A8 6.5px,#A8A8A8 8px,#E0E0E0 8px)"></div>
<div class="a" style="left:138px;top:497px;width:14px;height:12px;background:#F2F2F4;border:1px solid #8A8A8A"></div>
<div class="a hz" style="left:141px;top:500px;width:8px;background:#B0B0B8"></div><div class="a hz" style="left:141px;top:503px;width:8px;background:#B0B0B8"></div><div class="a hz" style="left:141px;top:506px;width:8px;background:#B0B0B8"></div>
<div class="a vl" style="left:575px;top:497px;height:14px;background:#B0B0B0"></div>
<div class="a vl" style="left:603px;top:497px;height:14px;background:#B0B0B0"></div>
<div class="a vl" style="left:633px;top:497px;height:14px;background:#B0B0B0"></div>
<svg style="left:586px;top:500px" width="9" height="8"><path d="M4.5 0V8L0 4Z M9 0V8L4.5 4Z" fill="#707070"/></svg>
<svg style="left:614px;top:500px" width="9" height="8"><path d="M0 0V8L4.5 4Z M4.5 0V8L9 4Z" fill="#707070"/></svg>
<svg style="left:643px;top:499px" width="10" height="10"><circle cx="5" cy="5" r="4" fill="none" stroke="#707070" stroke-width="1.3"/><circle cx="5" cy="5.5" r="1.3" fill="#707070"/></svg>


</body></html>
